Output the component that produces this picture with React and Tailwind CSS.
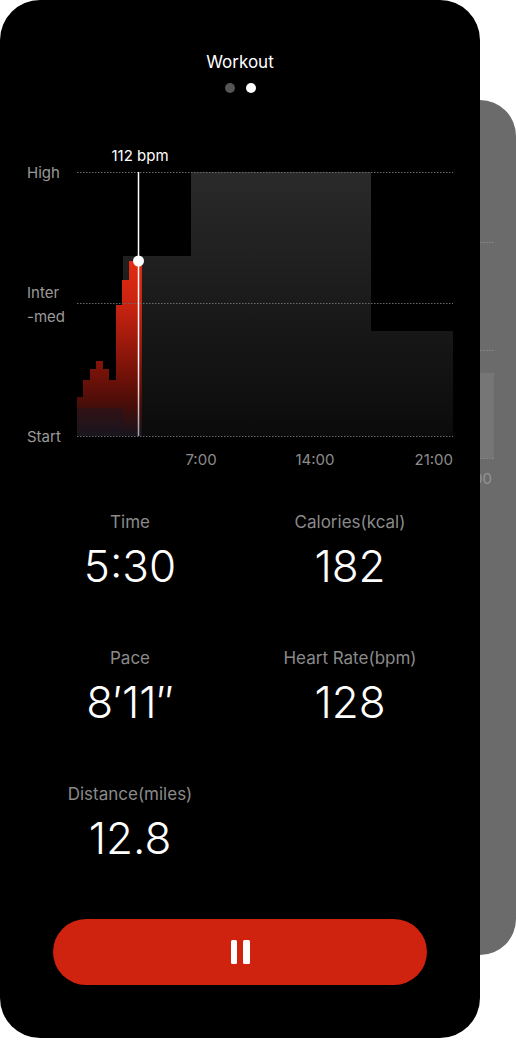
import React from "react";

function Chart() {
  // page y offset 140
  const o = (y) => y - 140;
  return (
    <svg width="480" height="330" viewBox="0 0 480 330" className="block">
      <defs>
        <linearGradient id="gbg" gradientUnits="userSpaceOnUse" x1="0" y1={o(172)} x2="0" y2={o(436)}>
          <stop offset="0" stopColor="#2a2a2a" />
          <stop offset="1" stopColor="#0b0b0b" />
        </linearGradient>
        <linearGradient id="gred" gradientUnits="userSpaceOnUse" x1="0" y1={o(256)} x2="0" y2={o(436)}>
          <stop offset="0" stopColor="#e62c12" />
          <stop offset="0.3" stopColor="#c42210" />
          <stop offset="0.62" stopColor="#7c1309" />
          <stop offset="0.82" stopColor="#4a0d08" />
          <stop offset="1" stopColor="#16141e" />
        </linearGradient>
        <linearGradient id="gline" gradientUnits="userSpaceOnUse" x1="0" y1={o(172)} x2="0" y2={o(436)}>
          <stop offset="0" stopColor="#ffffff" />
          <stop offset="0.7" stopColor="#ffffff" />
          <stop offset="1" stopColor="#ffffff" stopOpacity="0.6" />
        </linearGradient>
      </defs>

      {/* gray zone area */}
      <path
        d={`M123,${o(256)} H191 V${o(172)} H371 V${o(331)} H453 V${o(436)} H123 Z`}
        fill="url(#gbg)"
      />

      {/* red heart-rate steps */}
      <path
        d={`M77,${o(436)} V${o(397)} H83 V${o(380)} H90 V${o(369)} H96 V${o(361)} H103 V${o(369)} H109 V${o(380)} H116 V${o(305)} H122 V${o(280)} H129 V${o(261)} H142 V${o(436)} Z`}
        fill="url(#gred)"
      />
      {/* darker lower band */}
      <rect x="77" y={o(408)} width="46" height="28" fill="#1c1620" opacity="0.45" />

      {/* dotted grid lines */}
      {[172, 303, 436].map((y) => (
        <line key={y} x1="77" x2="453" y1={o(y) + 0.5} y2={o(y) + 0.5} stroke="#6a6a6a" strokeWidth="1" strokeDasharray="1.5 1.5" />
      ))}

      {/* cursor */}
      <line x1="138.5" x2="138.5" y1={o(172)} y2={o(436)} stroke="url(#gline)" strokeWidth="1.5" />
      <circle cx="138.5" cy={o(261)} r="5.5" fill="#ffffff" />

      <g fontFamily="Inter, 'Noto Sans', sans-serif">
        <text x="140" y={o(155)} fill="#ffffff" fontSize="15" textAnchor="middle" dominantBaseline="central">112 bpm</text>
        <text x="27" y={o(172)} fill="#9a9a9a" fontSize="15" dominantBaseline="central">High</text>
        <text x="27" y={o(292)} fill="#9a9a9a" fontSize="15" dominantBaseline="central">Inter</text>
        <text x="27" y={o(316)} fill="#9a9a9a" fontSize="15" dominantBaseline="central">-med</text>
        <text x="27" y={o(436)} fill="#9a9a9a" fontSize="15" dominantBaseline="central">Start</text>
        <text x="201" y={o(459)} fill="#8c8c8c" fontSize="15" textAnchor="middle" dominantBaseline="central">7:00</text>
        <text x="315" y={o(459)} fill="#8c8c8c" fontSize="15" textAnchor="middle" dominantBaseline="central">14:00</text>
        <text x="453" y={o(459)} fill="#8c8c8c" fontSize="15" textAnchor="end" dominantBaseline="central">21:00</text>
      </g>
    </svg>
  );
}

function Stat({ label, value }) {
  return (
    <div className="flex flex-col items-center">
      <div className="text-[17px] leading-[22px] text-[#8a8a8a]">{label}</div>
      <div className="mt-[7px] text-[44px] leading-[52px] font-light text-white">{value}</div>
    </div>
  );
}

export default function App() {
  return (
    <div className="w-[516px] h-[1040px] bg-white flex items-start font-['Inter','Noto_Sans',sans-serif]">
      <div className="relative z-10 flex-none w-[480px] h-[1038px] rounded-[40px] bg-black flex flex-col items-center">
        <div className="pt-[52px] text-[17px] leading-[20px] text-white">Workout</div>
        <div className="mt-[11px] flex gap-[11px]">
          <div className="w-[10px] h-[10px] rounded-full bg-[#555555]" />
          <div className="w-[10px] h-[10px] rounded-full bg-white" />
        </div>
        <div className="mt-[47px] self-stretch">
          <Chart />
        </div>
        <div className="mt-[41px] self-stretch grid grid-cols-2 px-[20px] gap-y-[55px]">
          <Stat label="Time" value="5:30" />
          <Stat label="Calories(kcal)" value="182" />
          <Stat label="Pace" value="8′11″" />
          <Stat label="Heart Rate(bpm)" value="128" />
          <Stat label="Distance(miles)" value="12.8" />
        </div>
        <button className="mt-[55px] w-[374px] h-[66px] rounded-full bg-[#cf230f] flex items-center justify-center gap-[6px]">
          <span className="block w-[6.5px] h-[24px] rounded-[1.5px] bg-white" />
          <span className="block w-[6.5px] h-[24px] rounded-[1.5px] bg-white" />
        </button>
      </div>
      <div className="mt-[100px] flex-none w-[36px] h-[855px] rounded-r-[36px] bg-[#6b6b6b] overflow-hidden">
        <svg width="36" height="400" viewBox="0 0 36 400" className="block">
          <line x1="0" x2="14" y1="142.5" y2="142.5" stroke="#8c8c8c" strokeDasharray="1.5 1.5" />
          <line x1="0" x2="14" y1="250.5" y2="250.5" stroke="#8c8c8c" strokeDasharray="1.5 1.5" />
          <rect x="0" y="273" width="14" height="85" fill="#767676" />
          <line x1="0" x2="14" y1="358.5" y2="358.5" stroke="#8c8c8c" strokeDasharray="1.5 1.5" />
          <text x="12" y="378" fill="#939393" fontSize="15" textAnchor="end" dominantBaseline="central" fontFamily="Inter, sans-serif">21:00</text>
        </svg>
      </div>
    </div>
  );
}
